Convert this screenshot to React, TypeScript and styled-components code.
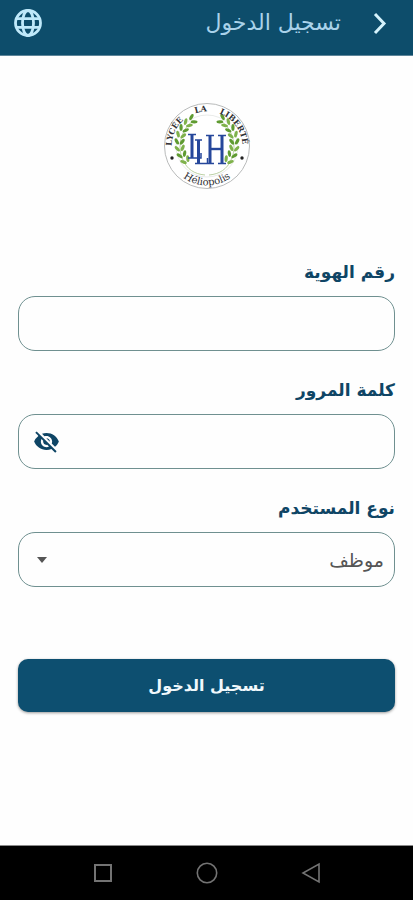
import React, { useState } from "react";
import styled, { createGlobalStyle } from "styled-components";
import { MdVisibility, MdVisibilityOff } from "react-icons/md";

const GlobalStyle = createGlobalStyle`
  *, *::before, *::after { box-sizing: border-box; }
  body { margin: 0; background: #fefefe; }
  button, input, select { font: inherit; }
`;

const Screen = styled.div`
  display: flex;
  flex-direction: column;
  min-height: 100vh;
  font-family: "DejaVu Sans", "Noto Sans", sans-serif;
  color: #0f4565;
`;

const TopBar = styled.header`
  display: flex;
  align-items: center;
  height: 56px;
  padding: 0 24px 10px 14px;
  background: #0d4d6b;
  border-bottom: 1px solid #5d8599;
`;

const IconButton = styled.button<{ $color: string }>`
  display: flex;
  padding: 0;
  border: 0;
  background: none;
  color: ${(p) => p.$color};
  cursor: pointer;
`;

const Title = styled.h1`
  flex: 1;
  margin: 0 30px 0 0;
  font-size: 22px;
  line-height: 32px;
  font-weight: 400;
  color: #a9d2ea;
`;

const Content = styled.main`
  flex: 1;
  display: flex;
  flex-direction: column;
  align-items: center;
  padding: 46px 18px 24px;
`;

const Form = styled.form`
  display: flex;
  flex-direction: column;
  gap: 27px;
  width: 100%;
  margin-top: 70px;
`;

const Field = styled.div`
  display: flex;
  flex-direction: column;
  gap: 12px;
`;

const Label = styled.label`
  align-self: flex-start;
  font-size: 17px;
  line-height: 24px;
  font-weight: 700;
`;

const Box = styled.div`
  display: flex;
  align-items: center;
  height: 55px;
  padding: 0 10px 0 14px;
  border: 1px solid #6f9090;
  border-radius: 17px;
`;

const TextInput = styled.input`
  flex: 1;
  min-width: 0;
  height: 100%;
  border: 0;
  outline: 0;
  background: none;
  font-size: 17px;
  color: #444;
`;

const Select = styled.select`
  flex: 1;
  min-width: 0;
  height: 100%;
  padding: 0;
  border: 0;
  outline: 0;
  appearance: none;
  background: none;
  font-size: 19px;
  line-height: 32px;
  color: #555;
`;

const Arrow = styled.svg`
  margin-left: 3px;
  pointer-events: none;
`;

const Submit = styled.button`
  height: 53px;
  margin-top: 45px;
  border: 0;
  border-radius: 10px;
  background: #0d4f70;
  box-shadow: 0 1px 3px rgba(0, 0, 0, 0.4);
  color: #f0f8fc;
  font-size: 16px;
  font-weight: 700;
  cursor: pointer;
`;

const NavBar = styled.nav`
  display: flex;
  justify-content: center;
  gap: 82px;
  align-items: center;
  height: 55px;
  background: #000;
  border-top: 1px solid #8a8a8a;
`;

const LEAF_ANGLES = [142, 156, 170, 184, 198, 212, 226, 240];

function Branch() {
  return (
    <g>
      <path d="M42 73C31 72 24 67 20 58 14 46 17 28 30 19" fill="none" stroke="#a9c48d" strokeWidth="0.8" />
      {LEAF_ANGLES.map((angle, i) => {
        const a = (angle * Math.PI) / 180;
        const x = 44 + 27.5 * Math.cos(a);
        const y = 41 + 27.5 * Math.sin(a);
        return (
          <g
            key={angle}
            transform={`translate(${x} ${y}) rotate(${angle + 90})`}
            fill={i % 2 ? "#5f9b31" : "#7fb24b"}
          >
            <ellipse cx="1" cy="-2.6" rx="3.4" ry="1.6" transform="rotate(-32)" />
            <ellipse cx="1" cy="2.6" rx="3.4" ry="1.6" transform="rotate(32)" />
          </g>
        );
      })}
    </g>
  );
}

function Logo() {
  return (
    <svg width="88" height="88" viewBox="0 0 88 88" role="img" aria-label="Lycée La Liberté Héliopolis" direction="ltr">
      <defs>
        <path id="arc-top" d="M9 50A35 35 0 0 1 44 9.500 35 35 0 0 1 79 50" />
        <path id="arc-bottom" d="M4.500 44a39.500 39.500 0 0 0 79 0" />
      </defs>
      <circle cx="44" cy="44" r="42.500" fill="#fff" stroke="#b9bbbb" />
      <circle cx="44" cy="44" r="31" fill="none" stroke="#dfe2df" strokeWidth="0.7" />
      <Branch />
      <g transform="matrix(-1 0 0 1 88 0)">
        <Branch />
      </g>
      <circle cx="9" cy="56" r="1.700" fill="#222" />
      <circle cx="79" cy="56" r="1.700" fill="#222" />
      <g fontFamily="DejaVu Serif, serif" fill="#303034" textAnchor="middle">
        <text fontSize="8" fontWeight="700">
          <textPath href="#arc-top" startOffset="17%">LYCÉE</textPath>
        </text>
        <text fontSize="8" fontWeight="700">
          <textPath href="#arc-top" startOffset="45%">LA</textPath>
        </text>
        <text fontSize="8" fontWeight="700">
          <textPath href="#arc-top" startOffset="77%">LIBERTÉ</textPath>
        </text>
        <text fontSize="10">
          <textPath href="#arc-bottom" startOffset="50%">Héliopolis</textPath>
        </text>
      </g>
      <g fill="none" stroke="#26479b">
        <path d="M29 32.500V56M35.500 38v23.500M47 33.500V61M59 33.500V61" strokeWidth="3" />
        <path d="M47 47h12" strokeWidth="2.400" />
        <path
          d="M25 32.500h8M25 56h13v-5M32 38h7M32 61.500h12.500v-5.500M43 33.500h8M55 33.500h8M43 61.500h8M55 61.500h8"
          strokeWidth="1.500"
        />
      </g>
    </svg>
  );
}

export default function App() {
  const [hidden, setHidden] = useState(true);
  return (
    <Screen dir="rtl" lang="ar">
      <GlobalStyle />
      <TopBar>
        <IconButton type="button" aria-label="رجوع" $color="#d5f3fc">
          <svg width="18" height="24" viewBox="0 0 18 24" fill="none" stroke="currentColor" strokeWidth="3">
            <path d="M4 3L13 12.500 4 22" />
          </svg>
        </IconButton>
        <Title>تسجيل الدخول</Title>
        <IconButton type="button" aria-label="اللغة" $color="#bfe9fa">
          <svg width="28" height="28" viewBox="0 0 28 28" fill="none" stroke="currentColor" strokeWidth="2.800">
            <circle cx="14" cy="14" r="12.500" />
            <ellipse cx="14" cy="14" rx="5.500" ry="12.500" />
            <path d="M2.500 9.700h23M2.500 18.300h23" />
          </svg>
        </IconButton>
      </TopBar>
      <Content>
        <Logo />
        <Form onSubmit={(e) => e.preventDefault()}>
          <Field>
            <Label htmlFor="identity">رقم الهوية</Label>
            <Box>
              <TextInput id="identity" type="text" />
            </Box>
          </Field>
          <Field>
            <Label htmlFor="password">كلمة المرور</Label>
            <Box>
              <TextInput id="password" type={hidden ? "password" : "text"} />
              <IconButton
                type="button"
                aria-label="إظهار كلمة المرور"
                $color="#0f4565"
                onClick={() => setHidden(!hidden)}
              >
                {hidden ? <MdVisibilityOff size={27} /> : <MdVisibility size={27} />}
              </IconButton>
            </Box>
          </Field>
          <Field>
            <Label htmlFor="role">نوع المستخدم</Label>
            <Box>
              <Select id="role" defaultValue="employee">
                <option value="employee">موظف</option>
              </Select>
              <Arrow width="12" height="6" viewBox="0 0 12 6" aria-hidden="true">
                <path d="M1 0h10L6 6z" fill="#555" />
              </Arrow>
            </Box>
          </Field>
          <Submit type="submit">تسجيل الدخول</Submit>
        </Form>
      </Content>
      <NavBar aria-label="النظام">
        <IconButton type="button" aria-label="السابق" $color="#737373">
          <svg width="22" height="22" viewBox="0 0 22 22" fill="none" stroke="currentColor" strokeWidth="1.600">
            <path d="M19 2v18L3 11z" />
          </svg>
        </IconButton>
        <IconButton type="button" aria-label="الرئيسية" $color="#737373">
          <svg width="22" height="22" viewBox="0 0 22 22" fill="none" stroke="currentColor" strokeWidth="1.600">
            <circle cx="11" cy="11" r="9.700" />
          </svg>
        </IconButton>
        <IconButton type="button" aria-label="التطبيقات" $color="#737373">
          <svg width="22" height="22" viewBox="0 0 22 22" fill="none" stroke="currentColor" strokeWidth="2">
            <path d="M3 3h16v16H3z" />
          </svg>
        </IconButton>
      </NavBar>
    </Screen>
  );
}
